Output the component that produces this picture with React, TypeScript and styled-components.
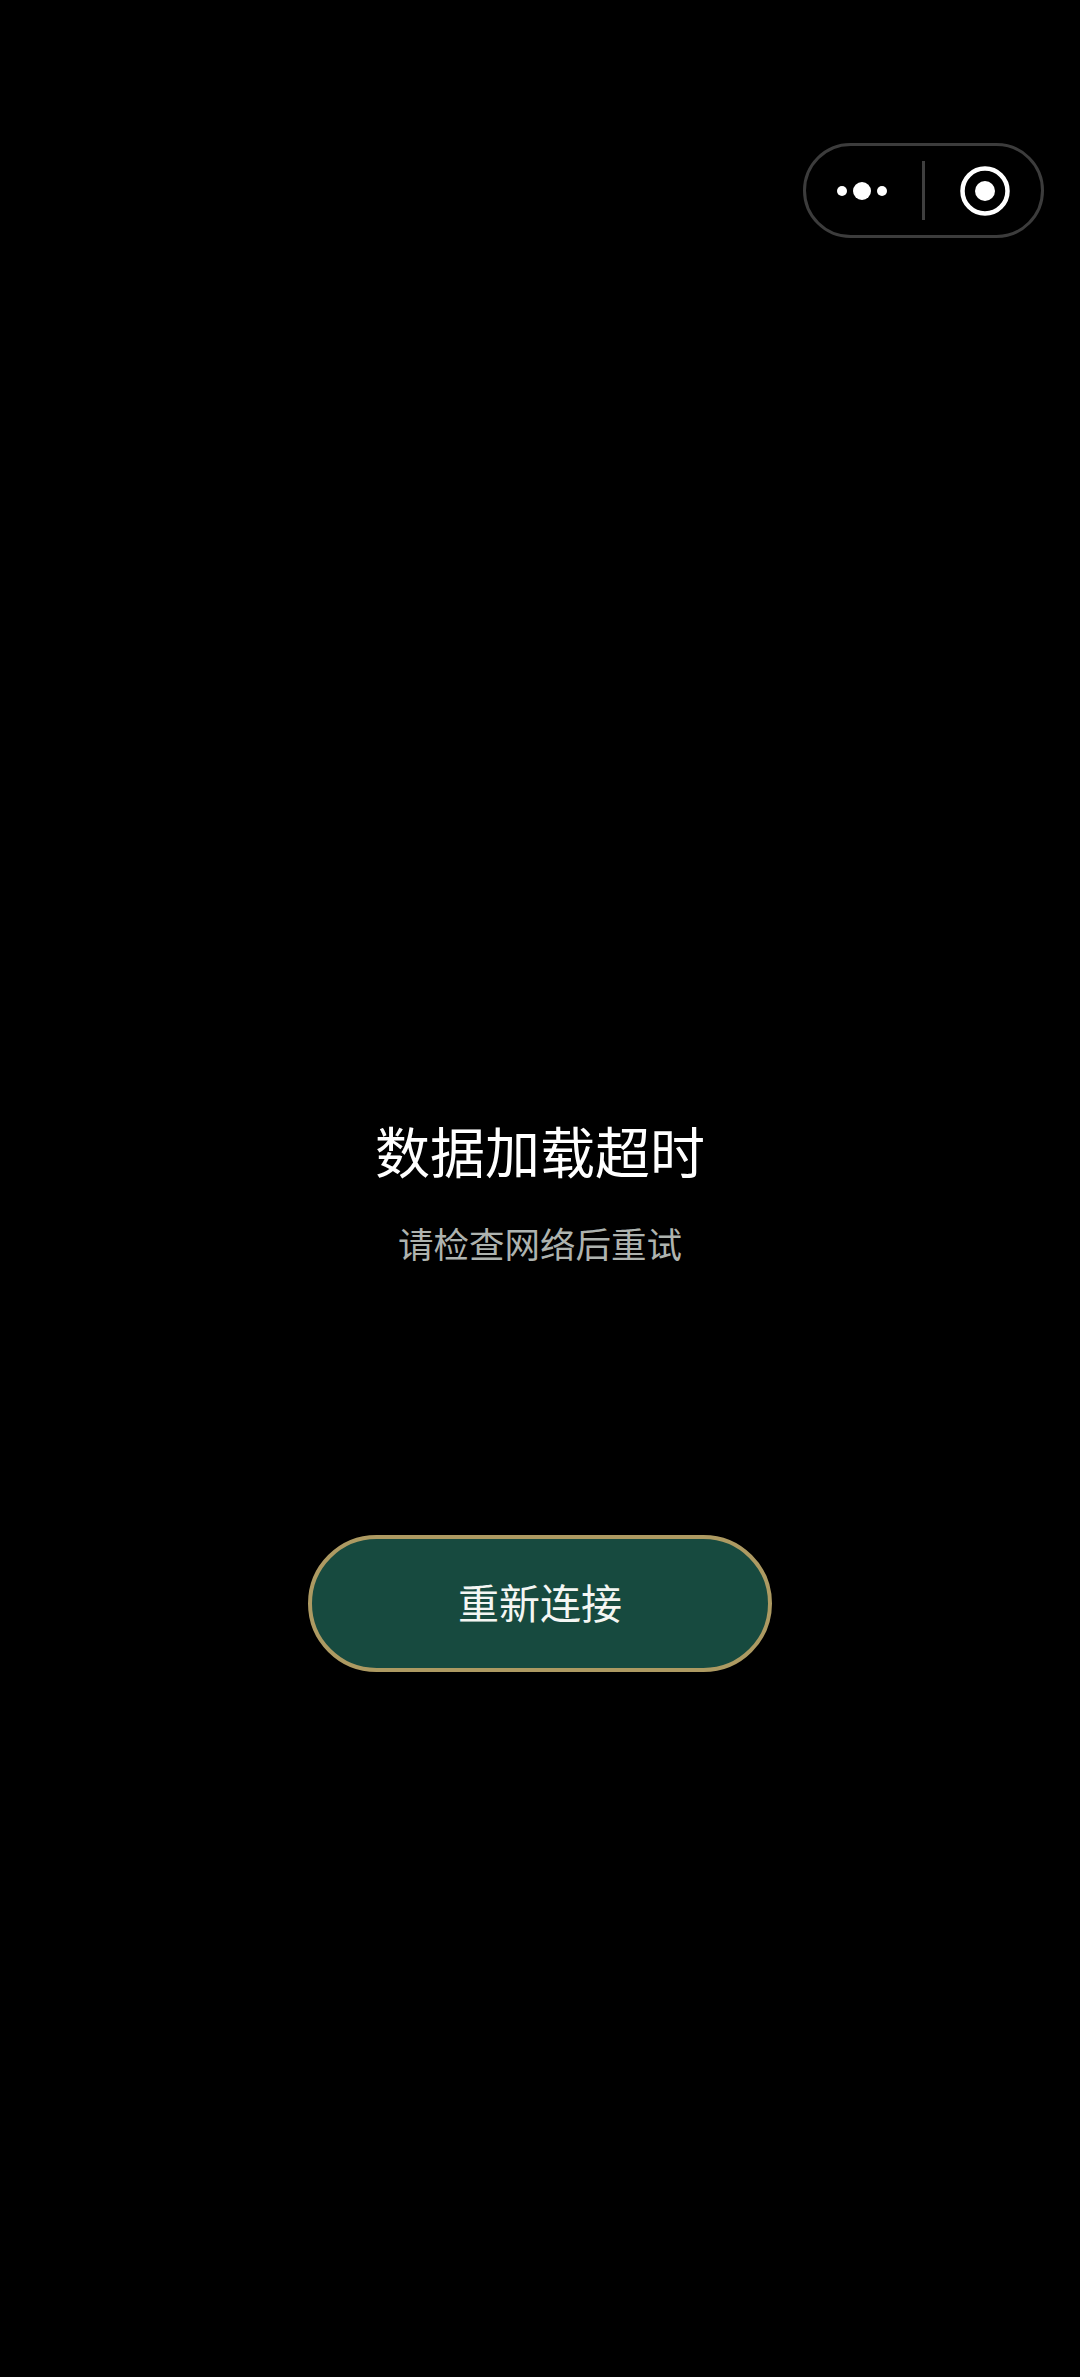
import React from "react";
import styled, { createGlobalStyle } from "styled-components";

const GlobalStyle = createGlobalStyle`
  html, body {
    margin: 0;
    padding: 0;
    background: #000;
  }
  body {
    font-family: "Noto Sans CJK SC", "Noto Sans", sans-serif;
  }
`;

const Page = styled.main`
  position: relative;
  width: 1080px;
  height: 2377px;
  overflow: hidden;
  background: #000;
  display: flex;
  flex-direction: column;
  align-items: center;
  padding-top: 1109px;
  box-sizing: border-box;
`;

const Capsule = styled.div`
  position: absolute;
  top: 143px;
  left: 803px;
  width: 241px;
  height: 95px;
  box-sizing: border-box;
  border: 3px solid #3c3c3c;
  border-radius: 48px;
  display: flex;
  align-items: center;
`;

const CapsuleSide = styled.button<{ $nudge: number }>`
  flex: 1;
  height: 100%;
  padding: 0;
  background: none;
  border: 0;
  display: flex;
  align-items: center;
  justify-content: center;
  padding-left: ${(p) => Math.max(p.$nudge, 0)}px;
  padding-right: ${(p) => Math.max(-p.$nudge, 0)}px;
`;

const CapsuleDivider = styled.span`
  width: 3px;
  height: 59px;
  background: #3f3f3f;
  flex: none;
`;

const Title = styled.h1`
  margin: 0;
  font-size: 55px;
  line-height: 80px;
  font-weight: 400;
  color: #ffffff;
`;

const Subtitle = styled.p`
  margin: 28px 0 0;
  font-size: 35.5px;
  line-height: 52px;
  font-weight: 400;
  color: #aeb3af;
`;

const RetryButton = styled.button`
  margin-top: 266px;
  width: 464px;
  height: 137px;
  box-sizing: border-box;
  border: 4px solid #ad9a62;
  border-radius: 69px;
  background: #174a3f;
  color: #f4f6f3;
  font-family: inherit;
  font-size: 41px;
  font-weight: 400;
  display: flex;
  align-items: center;
  justify-content: center;
  padding: 0 0 6px;
`;

export default function App() {
  return (
    <>
      <GlobalStyle />
      <Page>
        <Capsule>
          <CapsuleSide $nudge={-3} aria-label="更多">
            <svg width="60" height="20" viewBox="0 0 60 20">
              <circle cx="10" cy="10" r="5" fill="#fff" />
              <circle cx="30" cy="10" r="9" fill="#fff" />
              <circle cx="50" cy="10" r="5" fill="#fff" />
            </svg>
          </CapsuleSide>
          <CapsuleDivider />
          <CapsuleSide $nudge={4} aria-label="关闭">
            <svg width="50" height="50" viewBox="0 0 50 50">
              <circle cx="25" cy="25" r="22.5" fill="none" stroke="#fff" strokeWidth="4.5" />
              <circle cx="25" cy="25" r="10" fill="#fff" />
            </svg>
          </CapsuleSide>
        </Capsule>
        <Title>数据加载超时</Title>
        <Subtitle>请检查网络后重试</Subtitle>
        <RetryButton>重新连接</RetryButton>
      </Page>
    </>
  );
}
